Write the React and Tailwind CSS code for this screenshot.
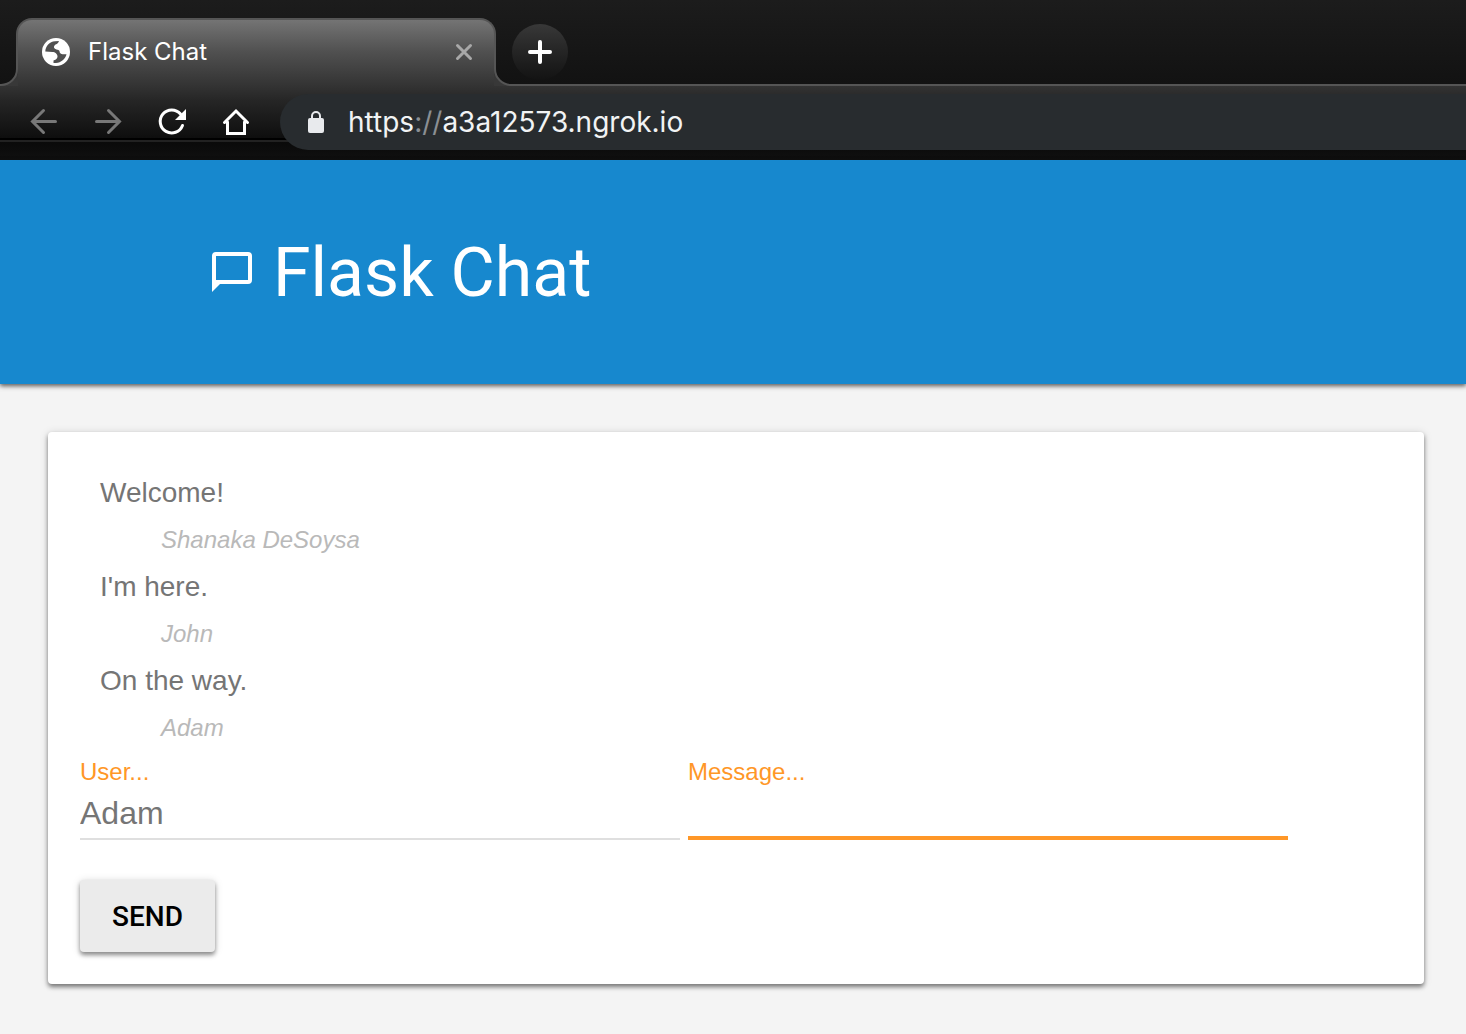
const messages = [
  { text: "Welcome!", user: "Shanaka DeSoysa" },
  { text: "I'm here.", user: "John" },
  { text: "On the way.", user: "Adam" },
];

function Globe() {
  return (
    <svg viewBox="0 0 28 28" className="size-7 shrink-0" aria-hidden="true">
      <circle cx="14" cy="14" r="14" fill="#fff" />
      <path
        d="M3.300 13.500C3.500 8 7.500 3.600 13 3.200L17 3 16 5C15.500 6 13 6 12 8.500 11.500 10.500 13.500 11.500 16.500 12L17.500 13C17.500 16 20 16.300 22 16.300H24.500C23.500 21 19 24.800 14 25H11.500V22.500C13 22 15.500 21 15.500 18.500 15.500 16 13 14 10.500 14Z"
        fill="#505050"
      />
    </svg>
  );
}

function Browser() {
  return (
    <header className="bg-[linear-gradient(to_bottom,#333_86px,#262626_100px,#0e0e0e_138px,#000_138px,#000_140px,#222_140px,#222_142px,#0a0a0a_142px,#101010_160px)]">
      <div className="flex h-[86px] items-end border-b-2 border-[#555] bg-linear-to-b from-[#1c1c1c] to-[#121212] pl-4">
        <div className="relative -mb-0.5 flex h-[68px] w-[480px] items-center rounded-t-2xl border-x-2 border-t-2 border-[#555] bg-[linear-gradient(to_bottom,#747474,#505050_32px,#333)] pr-5 pb-0.5 pl-6 text-white">
          <svg viewBox="0 0 18 18" className="absolute bottom-0 -left-[18px] size-[18px]" aria-hidden="true">
            <path d="M0 18V17H1A16 16 0 0 0 17 1V0H18V18Z" fill="#383838" />
            <path d="M0 17H1A16 16 0 0 0 17 1V0" fill="none" stroke="#555" strokeWidth="2" />
          </svg>
          <Globe />
          <span className="ml-[18px] flex-1 font-['Inter'] text-2xl">Flask Chat</span>
          <button aria-label="Close tab" className="text-[#a8a8a8]">
            <svg viewBox="0 0 20 20" className="size-5" fill="none" stroke="currentColor" strokeWidth="3" strokeLinecap="round">
              <path d="M3.500 3.500 16.500 16.500M16.500 3.500 3.500 16.500" />
            </svg>
          </button>
          <svg viewBox="0 0 18 18" className="absolute -right-[18px] bottom-0 size-[18px]" aria-hidden="true">
            <path d="M18 18V17H17A16 16 0 0 1 1 1V0H0V18Z" fill="#383838" />
            <path d="M18 17H17A16 16 0 0 1 1 1V0" fill="none" stroke="#555" strokeWidth="2" />
          </svg>
        </div>
        <button aria-label="New tab" className="mb-1 ml-4 flex size-14 items-center justify-center rounded-full bg-linear-to-b from-[#383838] to-[#131313] text-white">
          <svg viewBox="0 0 24 24" className="size-6" fill="none" stroke="currentColor" strokeWidth="4" strokeLinecap="round">
            <path d="M12 2V22M2 12H22" />
          </svg>
        </button>
      </div>
      <nav className="flex h-[74px] items-start pt-2 pl-7">
        <div className="flex h-14 items-center gap-8 text-white">
          <button aria-label="Back" className="text-[#787878]">
            <svg viewBox="0 0 32 32" className="size-8" fill="none" stroke="currentColor" strokeWidth="3" strokeLinecap="round">
              <path d="M27.500 15.500H5M15.500 4.500 4.500 15.500 15.500 26.500" />
            </svg>
          </button>
          <button aria-label="Forward" className="text-[#787878]">
            <svg viewBox="0 0 32 32" className="size-8" fill="none" stroke="currentColor" strokeWidth="3" strokeLinecap="round">
              <path d="M4.500 15.500H27M16.500 4.500 27.500 15.500 16.500 26.500" />
            </svg>
          </button>
          <button aria-label="Reload">
            <svg viewBox="0 0 32 32" className="size-8" fill="none" stroke="currentColor" strokeWidth="3" strokeLinecap="round">
              <path d="M26.500 19.500A11.500 11.500 0 1 1 24.500 8" />
              <path d="M30 3V14H19Z" fill="currentColor" stroke="none" />
            </svg>
          </button>
          <button aria-label="Home">
            <svg viewBox="0 0 32 32" className="size-8" fill="none" stroke="currentColor" strokeWidth="3" strokeLinecap="round">
              <path d="M4.500 16.500 16 5 27.500 16.500M7.500 16V27.500H24.500V16" />
            </svg>
          </button>
        </div>
        <div className="ml-7 flex h-14 flex-1 items-center rounded-l-full bg-[#282c2f] pl-7">
          <svg viewBox="0 0 16 22" className="h-[22px] w-4" aria-hidden="true">
            <rect y="7" width="16" height="15" rx="2" fill="#e8eaed" />
            <path d="M4 8V5a4 4 0 0 1 8 0v3" fill="none" stroke="#e8eaed" strokeWidth="2" />
          </svg>
          <div className="ml-6 font-['Inter'] text-[28px] text-[#f1f3f4]">
            https<span className="text-[#8b8f93]">://</span>a3a12573.ngrok.io
          </div>
        </div>
      </nav>
    </header>
  );
}

export default function App() {
  return (
    <div className="flex min-h-screen flex-col bg-[#f4f4f4] font-['Liberation_Sans',sans-serif]">
      <Browser />
      <div className="flex h-56 items-center gap-[21px] bg-[#1788ce] pl-[212px] text-white shadow-[0_2px_4px_rgba(0,0,0,0.5),0_2px_6px_rgba(0,0,0,0.2)]">
        <svg viewBox="0 0 40 40" className="size-10" aria-hidden="true">
          <path fillRule="evenodd" d="M4 0H36a4 4 0 0 1 4 4V28a4 4 0 0 1-4 4H8L0 40V4A4 4 0 0 1 4 0ZM4 4V28H36V4Z" fill="currentColor" />
        </svg>
        <h1 className="pt-0.5 font-['Roboto'] text-[68px] leading-20">Flask Chat</h1>
      </div>
      <main className="mt-12 mr-[42px] ml-12 rounded-sm bg-white p-8 shadow-[0_3px_4px_rgba(0,0,0,0.45),0_1px_8px_rgba(0,0,0,0.15)]">
        <ul className="px-5 pt-[5px]">
          {messages.map((m) => (
            <li key={m.user}>
              <p className="text-[28px] leading-12 text-[#757575]">{m.text}</p>
              <p className="pl-[61px] text-2xl leading-[46px] text-[#b9b9b9] italic">{m.user}</p>
            </li>
          ))}
        </ul>
        <form className="flex flex-col items-start">
          <div className="flex w-full gap-2">
            <div className="flex w-[600px] flex-col">
              <label htmlFor="user" className="text-2xl leading-[42px] text-[#ff9727]">User...</label>
              <input id="user" defaultValue="Adam" className="h-[47px] border-b-2 border-[#dfdfdf] pb-1.5 text-[32px] text-[#757575] outline-none" />
            </div>
            <div className="flex w-[600px] flex-col">
              <label htmlFor="message" className="text-2xl leading-[42px] text-[#ff9727]">Message...</label>
              <input id="message" className="h-[47px] border-b-4 border-[#ff9727] pb-1 text-[32px] text-[#757575] outline-none" />
            </div>
          </div>
          <button type="button" className="mt-10 h-18 rounded-sm bg-[#ebebeb] px-8 pt-0.5 font-['Roboto'] text-[28px] font-medium text-black uppercase shadow-[0_3px_4px_rgba(0,0,0,0.4),0_1px_8px_rgba(0,0,0,0.15)]">
            Send
          </button>
        </form>
      </main>
    </div>
  );
}
